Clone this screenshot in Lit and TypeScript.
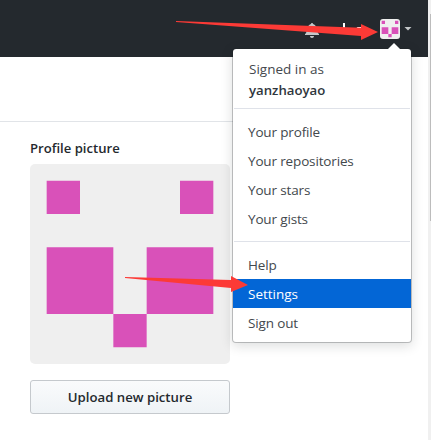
import { LitElement, html, css, svg } from "lit";
import { customElement } from "lit/decorators.js";

const cells = svg`<path fill="#d951b9" d="M1 1h2v2H1zM9 1h2v2H9zM1 5h4v4H1zM7 5h4v4H7zM5 9h2v2H5z"/>`;

@customElement("identicon-tile")
class IdenticonTile extends LitElement {
  static styles = css`
    :host { display: block; overflow: hidden; background: #efefef; }
    svg { display: block; width: 100%; height: 100%; }
  `;
  render() {
    return html`<svg viewBox="0 0 12 12">${cells}</svg>`;
  }
}

@customElement("account-menu")
class AccountMenu extends LitElement {
  static styles = css`
    :host {
      display: block; box-sizing: border-box; width: 180px; height: 295px;
      background: #fff; background-clip: padding-box;
      border: 1px solid rgba(27, 31, 35, 0.25); border-radius: 4px;
      box-shadow: 0 3px 12px rgba(27, 31, 35, 0.15);
      font-size: 13.5px; color: #43484d;
    }
    .who { padding: 10px 16px 7px; line-height: 21px; }
    .name { display: block; font-weight: 600; font-size: 13.2px; color: #2f363d; }
    .line { height: 1px; margin: 8px 1px; background: #dfe2e9; }
    .who + .line { margin-top: 0; }
    .item { box-sizing: border-box; height: 29px; padding: 1px 0 0 15px; line-height: 28px; letter-spacing: -0.15px; }
    .active { background: #0366d6; color: #fff; font-weight: 500; letter-spacing: 0; }
    .tip {
      position: absolute; left: 154px; top: -6px; width: 14px; height: 7px;
      background: #fff; clip-path: polygon(50% 0, 100% 100%, 0 100%);
    }
  `;
  render() {
    const item = (t: string) =>
      html`<div class="item ${t === "Settings" ? "active" : ""}">${t}</div>`;
    return html`
      <div class="tip"></div>
      <div class="who">Signed in as<span class="name">yanzhaoyao</span></div>
      <div class="line"></div>
      ${["Your profile", "Your repositories", "Your stars", "Your gists"].map(item)}
      <div class="line"></div>
      ${["Help", "Settings", "Sign out"].map(item)}
    `;
  }
}

@customElement("app-root")
class AppRoot extends LitElement {
  static styles = css`
    :host {
      display: flex; position: relative; width: 431px; height: 440px;
      overflow: hidden; background: #fff;
      font-family: "Open Sans", "Noto Sans", sans-serif;
    }
    .page { width: 428px; }
    .bar {
      display: flex; align-items: center; justify-content: flex-end;
      box-sizing: border-box; height: 57px; padding-right: 16px; background: #24292e;
    }
    .bell { width: 14px; height: 16px; margin: 2px 19px 0 0; }
    .plus { width: 12px; height: 14px; margin-right: 6px; }
    .caret { width: 8px; height: 4px; background: #c5c8ca; clip-path: polygon(0 0, 100% 0, 50% 100%); }
    .create { background: #fff; }
    .small { width: 20px; height: 20px; border-radius: 3px; margin: 0 4px 0 16px; }
    .top { height: 64px; border-bottom: 1px solid #e1e4e8; margin-right: 17px; }
    .profile { width: 200px; padding: 16px 0 0 30px; }
    .label { height: 26px; line-height: 21px; font-size: 13.1px; font-weight: 600; color: #24292e; }
    .large { width: 200px; height: 200px; border-radius: 5px; }
    .upload {
      display: block; box-sizing: border-box; width: 200px; height: 34px; margin-top: 16px; padding: 0;
      border: 1px solid #c5c9cd; border-radius: 3px;
      background: linear-gradient(#fafbfc, #eff3f6);
      font: 600 13.2px/20px "Open Sans", "Noto Sans", sans-serif; color: #24292e;
    }
    .scroll { width: 3px; background: #f0f0f0; }
    .thumb { width: 1px; height: 207px; margin: 14px 0 0 2px; background: #bcbcbc; }
    .menu { position: absolute; left: 232px; top: 48px; }
    .arrows { position: absolute; left: 0; top: 0; width: 431px; height: 440px; pointer-events: none; }
  `;
  render() {
    return html`
      <div class="page">
        <div class="bar">
          <svg class="bell" viewBox="0 0 14 16"><path fill="#c5c8ca" d="M14 12v1H0v-1l.73-.58c.77-.77.81-2.55 1.19-4.42C2.69 3.23 6 2 6 2c0-.55.45-1 1-1s1 .45 1 1c0 0 3.39 1.23 4.16 5 .38 1.88.42 3.66 1.19 4.42l.66.58H14zm-7 4c1.11 0 2-.89 2-2H5c0 1.11.89 2 2 2z"/></svg>
          <svg class="plus" viewBox="0 0 12 14"><path fill="#fff" d="M5 1h2v5h5v2H7v4H5V8H0V6h5z"/></svg>
          <div class="caret create"></div>
          <identicon-tile class="small"></identicon-tile>
          <div class="caret"></div>
        </div>
        <div class="top"></div>
        <div class="profile">
          <div class="label">Profile picture</div>
          <identicon-tile class="large"></identicon-tile>
          <button class="upload">Upload new picture</button>
        </div>
      </div>
      <div class="scroll"><div class="thumb"></div></div>
      <account-menu class="menu"></account-menu>
      <svg class="arrows" viewBox="0 0 431 440">
        <g fill="#fc3a36">
          <path d="M176 21L361 27.8V24L378 32L361 40V36L176 22z"/>
          <path d="M125 277L231 280V276L248 285L231 292V288L125 278z"/>
        </g>
      </svg>
    `;
  }
}
